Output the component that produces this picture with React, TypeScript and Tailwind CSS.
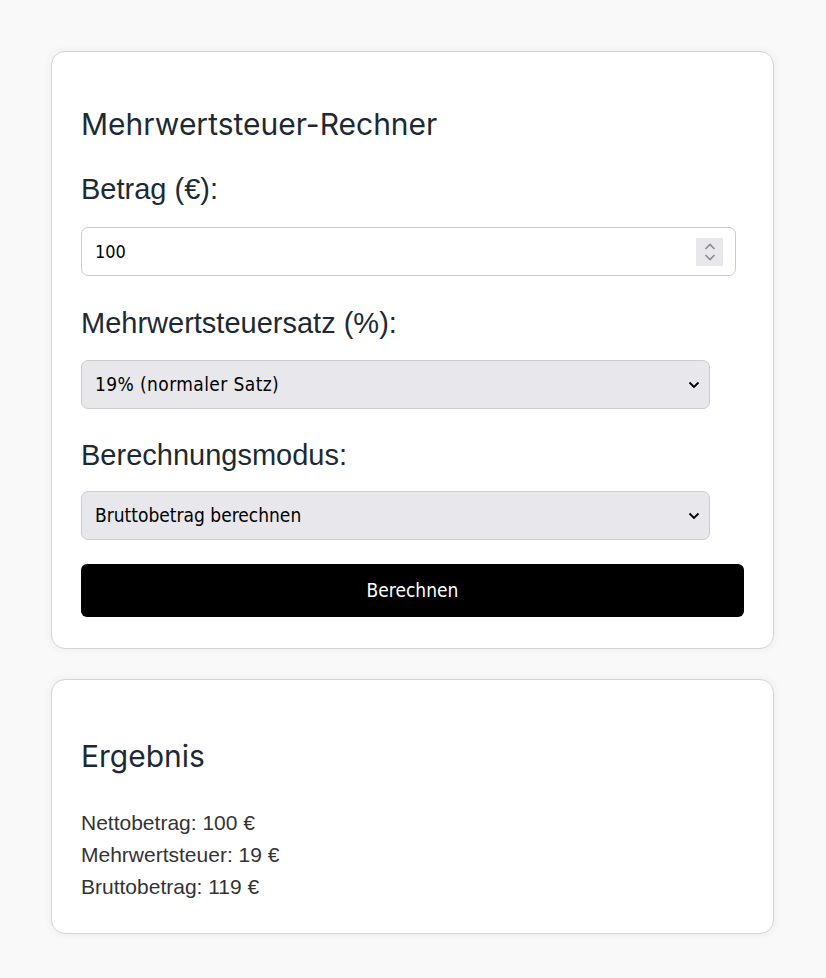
import React from "react";

const ctl = { fontFamily: '"DejaVu Sans Condensed", "DejaVu Sans", sans-serif' };
const arial = { fontFamily: '"Liberation Sans", Arial, sans-serif' };

function Chevron() {
  return (
    <svg width="12" height="8" viewBox="0 0 12 8" className="absolute right-[9px] top-1/2 -translate-y-1/2 pointer-events-none">
      <path d="M1.5 1.5 L6 6 L10.5 1.5" fill="none" stroke="#000" strokeWidth="1.8" />
    </svg>
  );
}

export default function App() {
  return (
    <div className="min-h-[978px] bg-[#f9f9f9] pt-[51px]" style={{ fontFamily: "Inter, sans-serif" }}>
      <div className="ml-[51px] w-[723px] flex flex-col gap-[30px]">
        <div className="bg-white border border-[#d4d4d4] rounded-[14px] shadow-[0_0_10px_rgba(0,0,0,0.06)] px-[29px] pt-[55px] pb-[31px]">
          <h2 className="text-[30px] leading-[34px] text-[#1d2a33] m-0">Mehrwertsteuer-Rechner</h2>
          <label className="block mt-[31px] text-[29px] leading-[34px] text-[#1d2a33]" style={arial}>Betrag (€):</label>
          <div className="relative mt-[21px] w-[655px] h-[49px] border border-[#cccccc] rounded-[7px] bg-white flex items-center px-[13px]">
            <span className="text-[18px] text-black" style={ctl}>100</span>
            <div className="absolute right-[12px] top-1/2 -translate-y-1/2 w-[27px] h-[28px] bg-[#e8e8ec] flex flex-col items-center justify-center gap-[4px]">
              <svg width="12" height="7" viewBox="0 0 12 7"><path d="M1.5 6 L6 1.5 L10.5 6" fill="none" stroke="#8a8a90" strokeWidth="1.6" /></svg>
              <svg width="12" height="7" viewBox="0 0 12 7"><path d="M1.5 1 L6 5.5 L10.5 1" fill="none" stroke="#8a8a90" strokeWidth="1.6" /></svg>
            </div>
          </div>
          <label className="block mt-[30px] text-[29px] leading-[34px] text-[#1d2a33]" style={arial}>Mehrwertsteuersatz (%):</label>
          <div className="relative mt-[20px] w-[629px] h-[49px] border border-[#cccccc] rounded-[7px] bg-[#e8e7ec] flex items-center px-[13px]">
            <span className="text-[19px] text-black tracking-[0.4px]" style={ctl}>19% (normaler Satz)</span>
            <Chevron />
          </div>
          <label className="block mt-[29px] text-[29px] leading-[34px] text-[#1d2a33]" style={arial}>Berechnungsmodus:</label>
          <div className="relative mt-[19px] w-[629px] h-[49px] border border-[#cccccc] rounded-[7px] bg-[#e8e7ec] flex items-center px-[13px]">
            <span className="text-[19px] text-black" style={ctl}>Bruttobetrag berechnen</span>
            <Chevron />
          </div>
          <button className="mt-[24px] w-full h-[53px] bg-black text-white rounded-[6px] text-[19px]" style={ctl}>Berechnen</button>
        </div>
        <div className="bg-white border border-[#d4d4d4] rounded-[14px] shadow-[0_0_10px_rgba(0,0,0,0.06)] px-[29px] pt-[59px] pb-[30px]">
          <h2 className="text-[30px] leading-[34px] text-[#1d2a33] m-0">Ergebnis</h2>
          <div className="mt-[34px] text-[21px] leading-[32px] text-[#333333]" style={arial}>
            <p>Nettobetrag: 100 €</p>
            <p>Mehrwertsteuer: 19 €</p>
            <p>Bruttobetrag: 119 €</p>
          </div>
        </div>
      </div>
    </div>
  );
}
